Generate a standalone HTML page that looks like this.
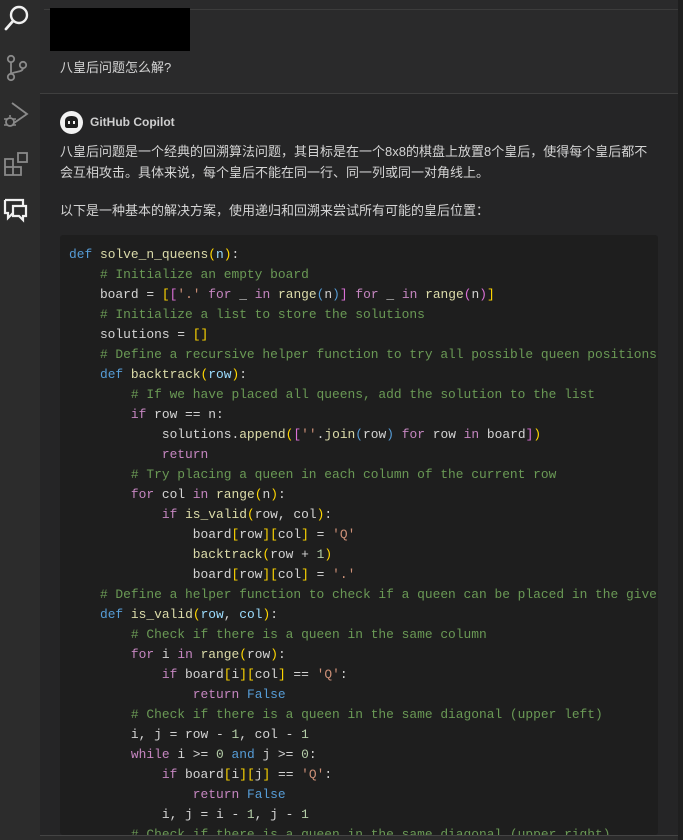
<!DOCTYPE html>
<html><head><meta charset="utf-8">
<style>
*{margin:0;padding:0;box-sizing:border-box}
body{width:683px;height:840px;overflow:hidden;background:#252526;font-family:"Liberation Sans","Noto Sans CJK SC",sans-serif;color:#cccccc;position:relative}
#act{position:absolute;left:0;top:0;width:40px;height:840px;background:#2c2c2c}
#act svg{position:absolute;left:0}
#top{position:absolute;left:40px;top:0;width:638px;height:94px;background:#2a2a2b;border-bottom:1px solid #3f3f3f}
#topline{position:absolute;left:44px;top:9px;width:634px;height:1px;background:#3c3c3c}
#redact{position:absolute;left:50px;top:8px;width:140px;height:43px;background:#000}
#sb{position:absolute;left:678px;top:0;width:5px;height:840px;background:#1f1f1f}
.t{position:absolute;left:60px;font-size:13px;white-space:nowrap;color:#d4d4d4}
#code{position:absolute;left:60px;top:235px;width:598px;height:600px;background:#1e1e1e;overflow:hidden;border-radius:3px}
pre{position:absolute;left:9px;top:10px;font-family:"Liberation Mono",monospace;font-size:12.9px;line-height:20px;color:#d4d4d4;white-space:pre}
.k{color:#569cd6}.f{color:#dcdcaa}.p{color:#9cdcfe}.c{color:#6a9955}.b{color:#ffd700}.b2{color:#da70d6}.s{color:#ce9178}.m{color:#c586c0}.n{color:#b5cea8}
#bot{position:absolute;left:40px;top:835px;width:638px;height:5px;background:#2b2b2b;border-top:1px solid #444}
</style></head><body>
<div id="act">
<svg style="top:0" width="40" height="36" viewBox="0 0 40 36"><circle cx="19" cy="15" r="8" fill="none" stroke="#f0f0f0" stroke-width="2.4"/><line x1="13" y1="21" x2="6" y2="29" stroke="#f0f0f0" stroke-width="2.8" stroke-linecap="round"/></svg>
<svg style="top:50px" width="40" height="34" viewBox="0 0 40 34"><circle cx="11" cy="9" r="3.2" fill="none" stroke="#8a8a8a" stroke-width="1.8"/><circle cx="11" cy="27" r="3.2" fill="none" stroke="#8a8a8a" stroke-width="1.8"/><circle cx="23" cy="15" r="3.2" fill="none" stroke="#8a8a8a" stroke-width="1.8"/><path d="M11 12V24M23 18C23 23 13 21 11.5 24" fill="none" stroke="#8a8a8a" stroke-width="1.8"/></svg>
<svg style="top:98px" width="40" height="34" viewBox="0 0 40 34"><path d="M12 5L27 16L14 25" fill="none" stroke="#8a8a8a" stroke-width="1.8"/><circle cx="10" cy="24" r="4" fill="none" stroke="#8a8a8a" stroke-width="1.8"/><path d="M4 21h3M4 27h3M13 21h3M13 27h3M10 19v-2" stroke="#8a8a8a" stroke-width="1.6"/></svg>
<svg style="top:148px" width="40" height="34" viewBox="0 0 40 34"><path d="M5 11h8v8H5zM5 19h8v8H5zM13 19h8v8h-8z" fill="none" stroke="#8a8a8a" stroke-width="1.8"/><rect x="18" y="5" width="9" height="9" fill="none" stroke="#8a8a8a" stroke-width="1.8"/></svg>
<svg style="top:196px" width="40" height="30" viewBox="0 0 40 30"><path d="M5 4h18v5M5 4v13h3v5l5-5h1" fill="none" stroke="#f0f0f0" stroke-width="2.2"/><path d="M13 10h13v10h-3v4l-4-4h-6z" fill="none" stroke="#f0f0f0" stroke-width="2.2"/></svg>
</div>
<div id="top"></div>
<div id="topline"></div>
<div id="redact"></div>
<div class="t" style="top:57px">八皇后问题怎么解?</div>
<svg style="position:absolute;left:60px;top:111px" width="23" height="23" viewBox="0 0 23 23"><circle cx="11.5" cy="11.5" r="11.5" fill="#f2f2f2"/><path d="M5 15v-5c0-3 2-5 6.5-5s6.5 2 6.5 5v5c0 1-1 2-2 2H7c-1 0-2-1-2-2z" fill="#1e1e1e"/><rect x="8" y="10" width="2" height="3" fill="#f2f2f2"/><rect x="13" y="10" width="2" height="3" fill="#f2f2f2"/></svg>
<div class="t" style="left:90px;top:115px;font-size:12px;font-weight:bold;color:#cfcfcf">GitHub Copilot</div>
<div class="t" style="top:141px">八皇后问题是一个经典的回溯算法问题，其目标是在一个8x8的棋盘上放置8个皇后，使得每个皇后都不</div>
<div class="t" style="top:162px">会互相攻击。具体来说，每个皇后不能在同一行、同一列或同一对角线上。</div>
<div class="t" style="top:200px">以下是一种基本的解决方案，使用递归和回溯来尝试所有可能的皇后位置：</div>
<div id="code"><pre><span class="k">def</span> <span class="f">solve_n_queens</span><span class="b">(</span><span class="p">n</span><span class="b">)</span>:
    <span class="c"># Initialize an empty board</span>
    board = <span class="b">[</span><span class="b2">[</span><span class="s">'.'</span> <span class="m">for</span> _ <span class="m">in</span> <span class="f">range</span><span class="k">(</span>n<span class="k">)</span><span class="b2">]</span> <span class="m">for</span> _ <span class="m">in</span> <span class="f">range</span><span class="b2">(</span>n<span class="b2">)</span><span class="b">]</span>
    <span class="c"># Initialize a list to store the solutions</span>
    solutions = <span class="b">[]</span>
    <span class="c"># Define a recursive helper function to try all possible queen positions</span>
    <span class="k">def</span> <span class="f">backtrack</span><span class="b">(</span><span class="p">row</span><span class="b">)</span>:
        <span class="c"># If we have placed all queens, add the solution to the list</span>
        <span class="m">if</span> row == n:
            solutions.<span class="f">append</span><span class="b">(</span><span class="b2">[</span><span class="s">''</span>.<span class="f">join</span><span class="k">(</span>row<span class="k">)</span> <span class="m">for</span> row <span class="m">in</span> board<span class="b2">]</span><span class="b">)</span>
            <span class="m">return</span>
        <span class="c"># Try placing a queen in each column of the current row</span>
        <span class="m">for</span> col <span class="m">in</span> <span class="f">range</span><span class="b">(</span>n<span class="b">)</span>:
            <span class="m">if</span> <span class="f">is_valid</span><span class="b">(</span>row, col<span class="b">)</span>:
                board<span class="b">[</span>row<span class="b">][</span>col<span class="b">]</span> = <span class="s">'Q'</span>
                <span class="f">backtrack</span><span class="b">(</span>row + <span class="n">1</span><span class="b">)</span>
                board<span class="b">[</span>row<span class="b">][</span>col<span class="b">]</span> = <span class="s">'.'</span>
    <span class="c"># Define a helper function to check if a queen can be placed in the given position</span>
    <span class="k">def</span> <span class="f">is_valid</span><span class="b">(</span><span class="p">row</span>, <span class="p">col</span><span class="b">)</span>:
        <span class="c"># Check if there is a queen in the same column</span>
        <span class="m">for</span> i <span class="m">in</span> <span class="f">range</span><span class="b">(</span>row<span class="b">)</span>:
            <span class="m">if</span> board<span class="b">[</span>i<span class="b">][</span>col<span class="b">]</span> == <span class="s">'Q'</span>:
                <span class="m">return</span> <span class="k">False</span>
        <span class="c"># Check if there is a queen in the same diagonal (upper left)</span>
        i, j = row - <span class="n">1</span>, col - <span class="n">1</span>
        <span class="m">while</span> i >= <span class="n">0</span> <span class="k">and</span> j >= <span class="n">0</span>:
            <span class="m">if</span> board<span class="b">[</span>i<span class="b">][</span>j<span class="b">]</span> == <span class="s">'Q'</span>:
                <span class="m">return</span> <span class="k">False</span>
            i, j = i - <span class="n">1</span>, j - <span class="n">1</span>
        <span class="c"># Check if there is a queen in the same diagonal (upper right)</span>
</pre></div>
<div id="bot"></div>
<div id="sb"></div>
</body></html>
